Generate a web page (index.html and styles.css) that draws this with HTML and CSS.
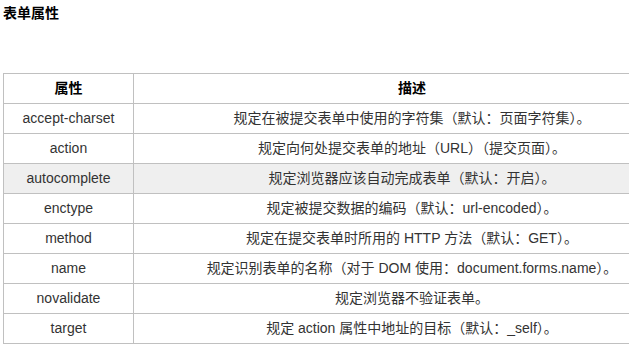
FILE: index.html
```html
<!DOCTYPE html>
<html lang="zh-CN">
<head>
<meta charset="utf-8">
<title>表单属性</title>
<link rel="stylesheet" href="styles.css">
</head>
<body>
<div class="page">
  <h3 class="title">表单属性</h3>
  <div class="table-wrap">
    <table class="ref">
      <thead>
        <tr><th class="col-attr">属性</th><th>描述</th></tr>
      </thead>
      <tbody>
        <tr><td>accept-charset</td><td>规定在被提交表单中使用的字符集（默认：页面字符集）。</td></tr>
        <tr><td>action</td><td>规定向何处提交表单的地址（URL）（提交页面）。</td></tr>
        <tr class="hl"><td>autocomplete</td><td>规定浏览器应该自动完成表单（默认：开启）。</td></tr>
        <tr><td>enctype</td><td>规定被提交数据的编码（默认：url-encoded）。</td></tr>
        <tr><td>method</td><td>规定在提交表单时所用的 HTTP 方法（默认：GET）。</td></tr>
        <tr><td>name</td><td>规定识别表单的名称（对于 DOM 使用：document.forms.name）。</td></tr>
        <tr><td>novalidate</td><td>规定浏览器不验证表单。</td></tr>
        <tr><td>target</td><td>规定 action 属性中地址的目标（默认：_self）。</td></tr>
      </tbody>
    </table>
  </div>
</div>
</body>
</html>
```

FILE: styles.css
```css
html, body {
  margin: 0;
  padding: 0;
  background: #fff;
}
body {
  font-family: "Liberation Sans", "Noto Sans CJK SC", sans-serif;
  color: #333;
  font-size: 14px;
}
.page {
  padding: 0 0 0 3px;
}
.title {
  margin: 0;
  padding-top: 4px;
  height: 73px;
  box-sizing: border-box;
  font-size: 14px;
  line-height: 18px;
  font-weight: bold;
  color: #000;
}
.table-wrap {
  overflow: hidden;
  width: 626px;
}
.ref {
  border-collapse: collapse;
  width: 688px;
  table-layout: fixed;
}
.ref th, .ref td {
  border: 1px solid #c0c0c0;
  height: 29px;
  line-height: 17px;
  padding: 0 4px;
  text-align: center;
  vertical-align: middle;
  white-space: nowrap;
}
.ref th {
  font-weight: bold;
  color: #000;
}
.ref .col-attr {
  width: 121px;
}
.ref tr.hl td {
  background: #efefef;
}
```
